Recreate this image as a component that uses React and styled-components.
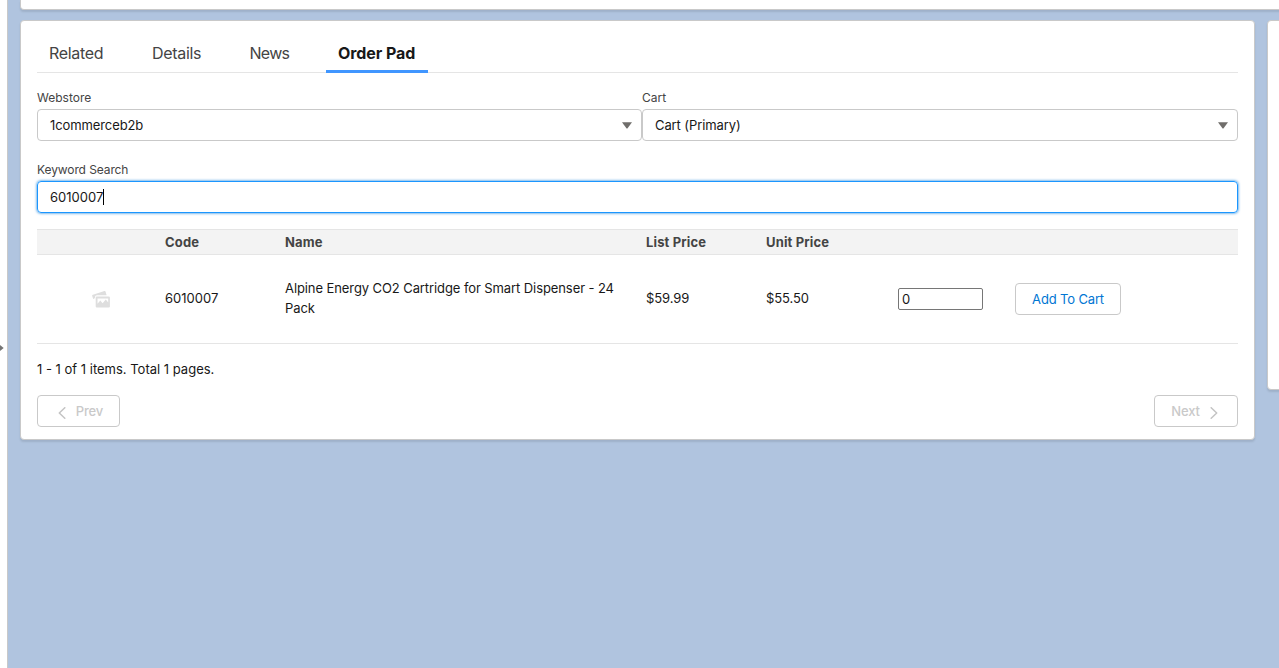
import React from 'react';
import styled, { createGlobalStyle, css } from 'styled-components';

const GlobalStyle = createGlobalStyle`
  *, *::before, *::after { box-sizing: border-box; }
  body {
    margin: 0;
    overflow: hidden;
    background: #b0c4df;
    color: #181818;
    font-family: Inter, "Liberation Sans", sans-serif;
    font-size: 13px;
    line-height: 20px;
  }
  button, input { font: inherit; }
`;

const Page = styled.div`
  display: flex;
  height: 668px;
  overflow: hidden;
`;

const SideRail = styled.aside`
  display: flex;
  flex: none;
  width: 8px;
  padding-top: 344px;
  background: #fff;
  border-right: 1px solid #c9c9c9;
`;

const Main = styled.main`
  flex: none;
  width: 1285px;
  padding-left: 12px;
`;

const Columns = styled.div`
  display: flex;
  align-items: flex-start;
  gap: 12px;
`;

const Card = styled.section`
  flex: none;
  background: #fff;
  border: 1px solid #c9c9c9;
  border-radius: 4px;
  box-shadow: 0 2px 2px rgba(0, 0, 0, 0.1);
`;

const HeaderCard = styled(Card)`
  height: 10px;
  margin-bottom: 10px;
  border-top: 0;
  border-radius: 0 0 4px 4px;
`;

const OrderCard = styled(Card)`
  width: 1235px;
  height: 420px;
  padding: 16px;
`;

const AsideCard = styled(Card)`
  width: 30px;
  height: 370px;
`;

const TabList = styled.nav`
  display: flex;
  gap: 24px;
  height: 36px;
  border-bottom: 1px solid #e5e5e5;
`;

const Tab = styled.a`
  width: ${({ $width }) => $width}px;
  height: 36px;
  padding-left: 12px;
  font-size: 16px;
  line-height: 33px;
  white-space: nowrap;
  color: #444;
  letter-spacing: ${({ $tracking }) => $tracking}px;
  ${({ $active }) => $active && css`
    color: #181818;
    font-weight: 700;
    border-bottom: 3px solid #4096ff;
  `}
`;

const FieldRow = styled.div`
  display: grid;
  grid-template-columns: 605px 596px;
  margin-top: 15px;
`;

const Field = styled.div`
  display: flex;
  flex-direction: column;
`;

const Label = styled.label`
  height: 21px;
  font-size: 12px;
  line-height: 20px;
  color: #444;
  letter-spacing: ${({ $tracking = 0 }) => $tracking}px;
`;

const Select = styled.div`
  display: flex;
  align-items: center;
  justify-content: space-between;
  height: 32px;
  padding: 0 9px 0 12px;
  border: 1px solid #c9c9c9;
  border-radius: 4px;
  letter-spacing: -0.1px;
`;

const SearchField = styled(Field)`
  margin-top: 19px;
`;

const SearchBox = styled.div`
  display: flex;
  align-items: center;
  height: 32px;
  padding-left: 12px;
  border: 1px solid #1b96ff;
  border-radius: 4px;
  box-shadow: 0 0 3px #0176d3;
`;

const Caret = styled.span`
  width: 1px;
  height: 16px;
  background: #000;
`;

const Row = styled.div`
  display: grid;
  grid-template-columns: 120px 120px 361px 120px 120px 125px 1fr;
  align-items: center;
  height: 89px;
  border-bottom: 1px solid #e5e5e5;
`;

const HeadRow = styled(Row)`
  height: 26px;
  margin-top: 16px;
  background: #f3f3f3;
  border-top: 1px solid #e5e5e5;
  color: #444;
  font-weight: 700;
`;

const Cell = styled.div`
  padding: 0 8px;
  letter-spacing: ${({ $tracking = 0 }) => $tracking}px;
`;

const HeadCell = styled(Cell)`
  letter-spacing: 0.15px;
`;

const TextCell = styled(Cell)`
  padding-bottom: 2px;
`;

const IconCell = styled(Cell)`
  display: flex;
  padding-left: 55px;
`;

const QuantityCell = styled(Cell)`
  display: flex;
  padding-left: 20px;
`;

const ActionCell = styled(Cell)`
  display: flex;
  padding-left: 12px;
`;

const Quantity = styled.input`
  width: 85px;
  height: 22px;
  padding: 1px 3px;
  border: 1px solid #767676;
  border-radius: 2px;
  color: #181818;
  background: #fff;
`;

const Button = styled.button`
  display: flex;
  align-items: center;
  justify-content: center;
  gap: 10px;
  width: ${({ $width }) => $width}px;
  height: 32px;
  padding: 0;
  border: 1px solid #c9c9c9;
  border-radius: 4px;
  background: #fff;
  white-space: nowrap;
  color: #0176d3;
  letter-spacing: -0.15px;
`;

const PagerButton = styled(Button)`
  padding-left: ${({ $direction }) => ($direction === 'left' ? 4 : 0)}px;
  padding-right: ${({ $direction }) => ($direction === 'right' ? 3 : 0)}px;
  color: #c9c9c9;
  font-weight: 500;
`;

const Summary = styled.p`
  margin: 15px 0 16px;
`;

const Pager = styled.div`
  display: flex;
  justify-content: space-between;
`;

const Icon = styled.svg`
  display: block;
  flex: none;
  margin-top: ${({ $drop = 0 }) => $drop}px;
`;

const DownArrow = () => (
  <Icon width="10" height="7" viewBox="0 0 10 7">
    <path d="M0 0.3h10L5.6 6.3q-.6.6-1.2 0z" fill="#706e6b" />
  </Icon>
);

const PhotoIcon = () => (
  <Icon width="18" height="17" viewBox="0 0 18 17">
    <path
      d="M1.2 8 .2 5Q0 4 .9 3.7L12.4 .1q.9-.2 1.2 .6l1 3.500H5Q3 4.200 3 6v.8l-.6 .2.2 .6z"
      fill="#dedede"
    />
    <path
      fillRule="evenodd"
      d="M4.800 5.500h12q1.100 0 1.100 1.100v8.800q0 1.100-1.100 1.100h-12q-1.100 0-1.100-1.100V6.600q0-1.100 1.100-1.100zM5.500 7.500v5.300l2.800-3.200 2.300 2.600 3.200-3.600 2.400 3V7.500z"
      fill="#dedede"
    />
  </Icon>
);

const Chevron = ({ direction }) => (
  <Icon $drop={3} width="8" height="12" viewBox="0 0 8 12">
    <path
      d={direction === 'left' ? 'M6.8 .7 1.3 6l5.5 5.3' : 'M1.2 .7 6.7 6l-5.5 5.3'}
      fill="none"
      stroke="#c4c4c4"
      strokeWidth="1.5"
      strokeLinecap="round"
      strokeLinejoin="round"
    />
  </Icon>
);

const tabs = [
  { label: 'Related', width: 79, tracking: -0.3 },
  { label: 'Details', width: 73.5, tracking: -0.3 },
  { label: 'News', width: 64.5, tracking: -0.7 },
  { label: 'Order Pad', width: 102, tracking: -0.08, active: true },
];

export default function App() {
  return (
    <>
      <GlobalStyle />
      <Page>
        <SideRail>
          <Icon width="4" height="8" viewBox="0 0 4 8">
            <path d="M0 1 3.7 4 0 7z" fill="#747474" />
          </Icon>
        </SideRail>
        <Main>
          <HeaderCard />
          <Columns>
            <OrderCard>
              <TabList>
                {tabs.map((tab) => (
                  <Tab key={tab.label} $width={tab.width} $tracking={tab.tracking} $active={tab.active}>
                    {tab.label}
                  </Tab>
                ))}
              </TabList>
              <FieldRow>
                <Field>
                  <Label>Webstore</Label>
                  <Select><span>1commerceb2b</span><DownArrow /></Select>
                </Field>
                <Field>
                  <Label>Cart</Label>
                  <Select><span>Cart (Primary)</span><DownArrow /></Select>
                </Field>
              </FieldRow>
              <SearchField>
                <Label $tracking={-0.1}>Keyword Search</Label>
                <SearchBox><span>6010007</span><Caret /></SearchBox>
              </SearchField>
              <HeadRow>
                <HeadCell />
                <HeadCell>Code</HeadCell>
                <HeadCell>Name</HeadCell>
                <HeadCell>List Price</HeadCell>
                <HeadCell>Unit Price</HeadCell>
              </HeadRow>
              <Row>
                <IconCell><PhotoIcon /></IconCell>
                <TextCell>6010007</TextCell>
                <TextCell $tracking={-0.09}>Alpine Energy CO2 Cartridge for Smart Dispenser - 24 Pack</TextCell>
                <TextCell $tracking={-0.1}>$59.99</TextCell>
                <TextCell $tracking={-0.1}>$55.50</TextCell>
                <QuantityCell><Quantity defaultValue="0" /></QuantityCell>
                <ActionCell><Button $width={106}>Add To Cart</Button></ActionCell>
              </Row>
              <Summary>1 - 1 of 1 items. Total 1 pages.</Summary>
              <Pager>
                <PagerButton disabled $width={83} $direction="left"><Chevron direction="left" />Prev</PagerButton>
                <PagerButton disabled $width={84} $direction="right">Next<Chevron direction="right" /></PagerButton>
              </Pager>
            </OrderCard>
            <AsideCard />
          </Columns>
        </Main>
      </Page>
    </>
  );
}
